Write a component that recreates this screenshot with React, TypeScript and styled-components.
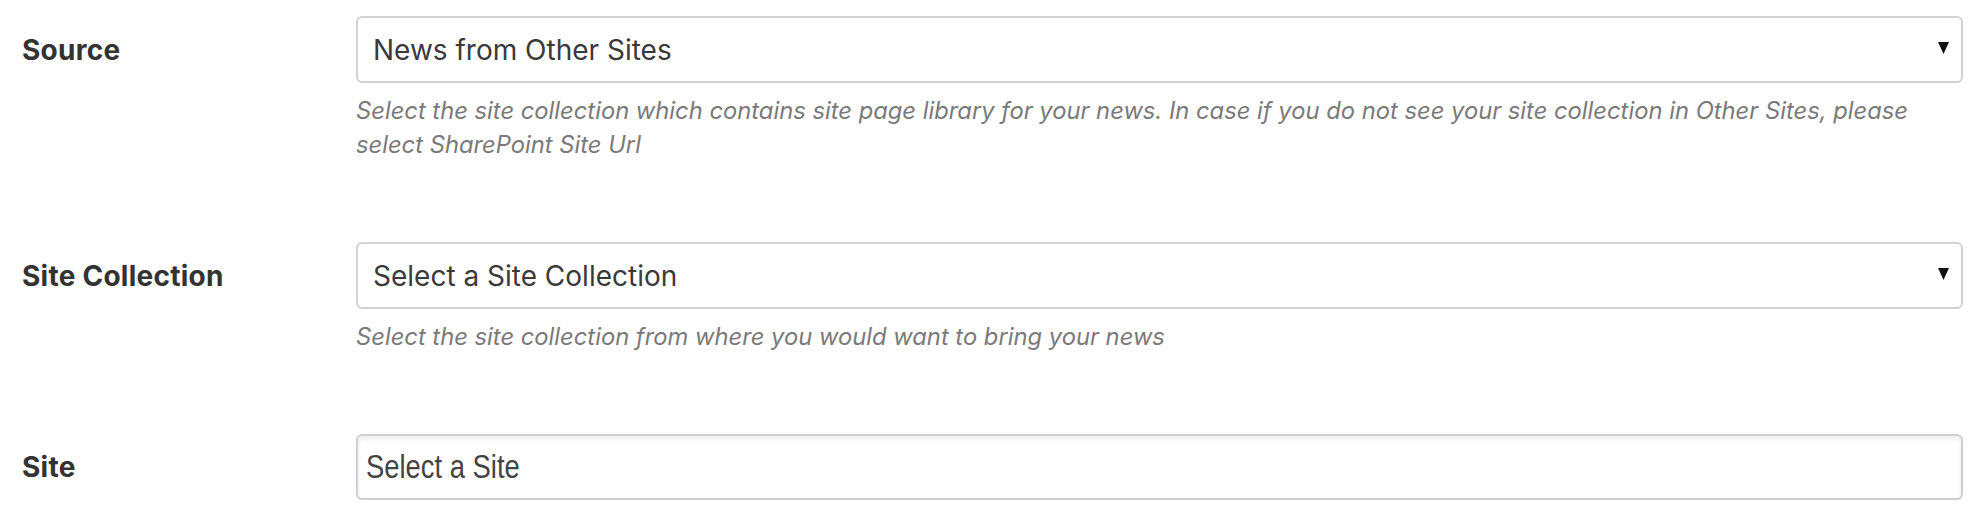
import React from "react";
import styled, { createGlobalStyle } from "styled-components";

const GlobalStyle = createGlobalStyle`
  html, body {
    margin: 0;
    padding: 0;
    background: #ffffff;
  }
  body {
    font-family: Inter, "Noto Sans", "Liberation Sans", sans-serif;
  }
`;

const Page = styled.div`
  width: 1986px;
  box-sizing: border-box;
  padding: 16px 23px 0 22px;
`;

const FormRow = styled.div`
  display: grid;
  grid-template-columns: 334px 1fr;
  margin-bottom: 80px;

  &:last-child {
    margin-bottom: 0;
  }
`;

const Label = styled.div<{ $height: number }>`
  height: ${(p) => p.$height}px;
  display: flex;
  align-items: center;
  font-family: Inter, "Liberation Sans", sans-serif;
  font-weight: 700;
  font-size: 28px;
  color: #333333;
  letter-spacing: 0.25px;
`;

const Control = styled.div`
  display: flex;
  flex-direction: column;
`;

const SelectBox = styled.div`
  position: relative;
  height: 67px;
  box-sizing: border-box;
  border: 2px solid #d2d2d2;
  border-radius: 6px;
  background: #ffffff;
  display: flex;
  align-items: center;
  padding: 0 50px 0 15px;
  font-family: Inter, "Liberation Sans", sans-serif;
  font-size: 28px;
  color: #3a3a3a;
`;

const Arrow = styled.svg`
  position: absolute;
  right: 12px;
  top: 24px;
  width: 11px;
  height: 12px;
`;

const TextInput = styled.div`
  height: 66px;
  box-sizing: border-box;
  border: 2px solid #cfcfcf;
  border-radius: 6px;
  background: #ffffff;
  box-shadow: inset 0 3px 5px rgba(0, 0, 0, 0.07);
  display: flex;
  align-items: center;
  padding: 0 0 0 8px;
  font-family: "Liberation Sans", Arial, sans-serif;
  font-size: 33px;
  color: #444444;
`;

const NarrowText = styled.span`
  display: inline-block;
  transform: scaleX(0.83);
  transform-origin: left center;
  white-space: nowrap;
`;

const Help = styled.p`
  margin: 11px 0 0 0;
  font-family: Inter, "Liberation Sans", sans-serif;
  font-style: italic;
  font-size: 23.75px;
  line-height: 34px;
  color: #7a7a7a;
`;

function Select({ value }: { value: string }) {
  return (
    <SelectBox>
      {value}
      <Arrow viewBox="0 0 11 12">
        <polygon points="0,0 11,0 5.5,12" fill="#111" />
      </Arrow>
    </SelectBox>
  );
}

export default function App() {
  return (
    <>
      <GlobalStyle />
      <Page>
        <FormRow>
          <Label $height={67}>Source</Label>
          <Control>
            <Select value="News from Other Sites" />
            <Help>
              Select the site collection which contains site page library for your news. In case if
              you do not see your site collection in Other Sites, please select SharePoint Site Url
            </Help>
          </Control>
        </FormRow>
        <FormRow>
          <Label $height={67}>Site Collection</Label>
          <Control>
            <Select value="Select a Site Collection" />
            <Help>Select the site collection from where you would want to bring your news</Help>
          </Control>
        </FormRow>
        <FormRow>
          <Label $height={66}>Site</Label>
          <Control>
            <TextInput>
              <NarrowText>Select a Site</NarrowText>
            </TextInput>
          </Control>
        </FormRow>
      </Page>
    </>
  );
}
